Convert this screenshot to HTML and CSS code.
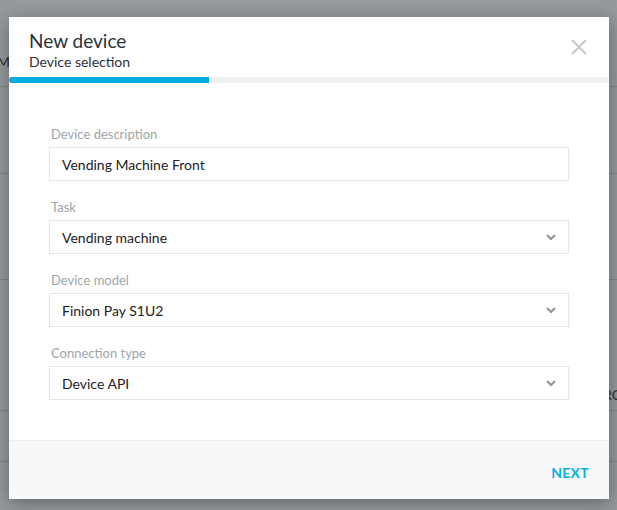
FILE: index.html
```html
<!DOCTYPE html>
<html>
<head>
<meta charset="utf-8">
<link rel="stylesheet" href="styles.css">
</head>
<body>
<div class="page">
  <div class="bg-row bg-r1"><span class="bg-text-left">Ma</span></div>
  <div class="bg-row bg-r2"></div>
  <div class="bg-row bg-r3"></div>
  <div class="bg-row bg-r4"><span class="bg-text-right">RC</span></div>
  <div class="bg-row bg-r5"></div>
</div>
<div class="backdrop"></div>
<div class="modal">
  <div class="modal-header">
    <div class="titles">
      <div class="title">New device</div>
      <div class="subtitle">Device selection</div>
    </div>
    <button class="close" aria-label="Close">
      <svg width="16" height="16" viewBox="0 0 16 16"><path d="M1 1 L15 15 M15 1 L1 15" stroke="#c6c8ca" stroke-width="2" fill="none"/></svg>
    </button>
  </div>
  <div class="progress"><div class="progress-fill" style="width:200px"></div></div>
  <div class="modal-body">
    <div class="field">
      <div class="label">Device description</div>
      <div class="input">Vending Machine Front</div>
    </div>
    <div class="field">
      <div class="label">Task</div>
      <div class="input select">Vending machine<svg class="chev" width="10" height="7" viewBox="0 0 10 7"><path d="M1 1 L5 5 L9 1" stroke="#8e9397" stroke-width="2" fill="none"/></svg></div>
    </div>
    <div class="field">
      <div class="label">Device model</div>
      <div class="input select">Finion Pay S1U2<svg class="chev" width="10" height="7" viewBox="0 0 10 7"><path d="M1 1 L5 5 L9 1" stroke="#8e9397" stroke-width="2" fill="none"/></svg></div>
    </div>
    <div class="field">
      <div class="label">Connection type</div>
      <div class="input select">Device API<svg class="chev" width="10" height="7" viewBox="0 0 10 7"><path d="M1 1 L5 5 L9 1" stroke="#8e9397" stroke-width="2" fill="none"/></svg></div>
    </div>
  </div>
  <div class="modal-footer">
    <button class="next">NEXT</button>
  </div>
</div>
</body>
</html>
```
FILE: styles.css
```css
html, body {
  margin: 0;
  padding: 0;
}
body {
  width: 617px;
  height: 510px;
  overflow: hidden;
  position: relative;
  font-family: Lato, "Liberation Sans", sans-serif;
  background: #ffffff;
}
.page {
  display: flex;
  flex-direction: column;
  height: 510px;
}
.bg-row {
  border-bottom: 1px solid #d4d6d8;
  position: relative;
  font-size: 14px;
  color: #333;
}
.bg-r1 { height: 86px; }
.bg-r2 { height: 86px; }
.bg-r3 { height: 105px; }
.bg-r4 { height: 130px; }
.bg-r5 { height: 50px; }
.bg-text-left {
  position: absolute;
  left: -3px;
  top: 53px;
}
.bg-text-right {
  position: absolute;
  right: -4px;
  top: 106px;
}
.backdrop {
  position: absolute;
  inset: 0;
  background: rgba(36, 44, 50, 0.48);
}
.modal {
  position: absolute;
  left: 9px;
  top: 17px;
  width: 600px;
  height: 482px;
  background: #fff;
  box-shadow: 0 4px 18px rgba(0, 0, 0, 0.35);
  display: flex;
  flex-direction: column;
}
.modal-header {
  display: flex;
  justify-content: space-between;
  align-items: flex-start;
  padding: 12px 22px 0 20px;
}
.title {
  font-size: 19px;
  line-height: 24px;
  color: #2b3139;
}
.subtitle {
  font-size: 14px;
  line-height: 18px;
  color: #2b3139;
}
.close {
  border: none;
  background: none;
  padding: 0;
  margin-top: 10px;
  width: 16px;
  height: 16px;
  display: flex;
}
.progress {
  margin-top: 6px;
  height: 6px;
  background: #eef0f1;
  border-radius: 0 4px 4px 0;
}
.progress-fill {
  height: 6px;
  background: #00ade1;
  border-radius: 3px 0 0 3px;
}
.modal-body {
  flex: 1;
  padding: 42px 40px 0 40px;
  display: flex;
  flex-direction: column;
  gap: 17px;
}
.label {
  font-size: 13px;
  line-height: 18px;
  color: #a0a5aa;
  padding-left: 2px;
  margin-bottom: 4px;
}
.input {
  height: 34px;
  box-sizing: border-box;
  border: 1px solid #e3e5e7;
  padding: 0 12px;
  font-size: 14px;
  color: #1d2125;
  display: flex;
  align-items: center;
  justify-content: space-between;
}
.chev {
  margin-right: 0;
}
.modal-footer {
  height: 58px;
  background: #f7f8fa;
  border-top: 1px solid #eceef0;
  display: flex;
  justify-content: flex-end;
  align-items: center;
  padding: 0 20px;
}
.next {
  border: none;
  background: none;
  padding: 0;
  margin-top: 4px;
  font-family: Lato, "Liberation Sans", sans-serif;
  font-weight: 700;
  font-size: 14px;
  color: #0aaee3;
  letter-spacing: 0.3px;
}
```
